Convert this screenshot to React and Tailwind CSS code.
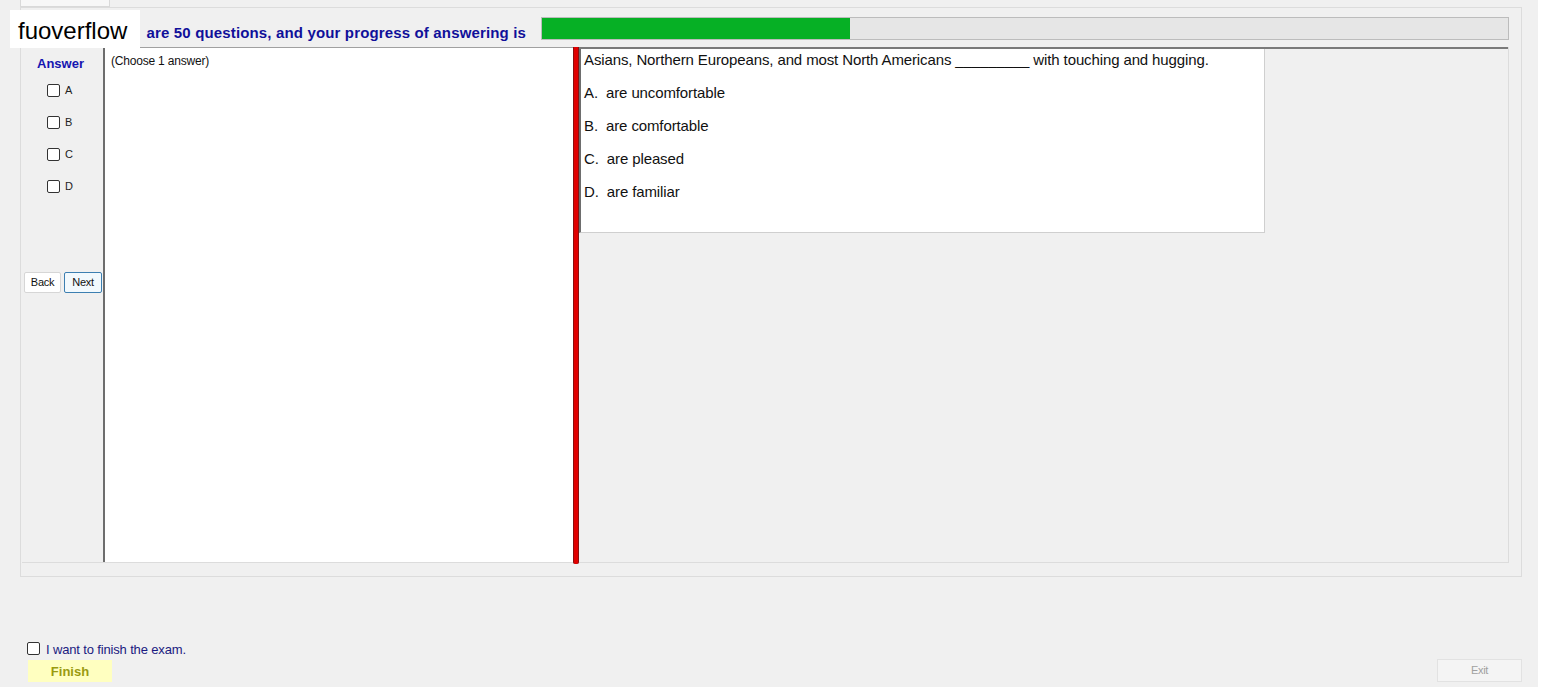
import React from "react";

function Box({ className = "" }) {
  return (
    <span
      className={
        "inline-block w-[13px] h-[13px] bg-white border border-[#333333] rounded-[2px] " +
        className
      }
    />
  );
}

export default function App() {
  const font = { fontFamily: '"Liberation Sans", Arial, sans-serif' };
  const options = ["A", "B", "C", "D"];
  const answers = [
    "A.  are uncomfortable",
    "B.  are comfortable",
    "C.  are pleased",
    "D.  are familiar",
  ];
  return (
    <div className="w-[1542px] h-[690px] bg-white overflow-hidden" style={font}>
      <div className="relative w-[1538px] h-[687px] bg-[#f0f0f0] flex flex-col">
        {/* tab header */}
        <div className="ml-[20px] w-[90px] h-[7px] bg-[#f7f7f7] border-x border-b border-[#d9d9d9]" />
        {/* group */}
        <div className="ml-[20px] w-[1502px] h-[570px] border border-[#dcdcdc] flex flex-col">
          {/* header row */}
          <div className="h-[39px] flex items-start pt-[9px]">
            <div className="w-[520px] h-[23px] flex items-end justify-end pr-[15px]">
              <span className="text-[15px] font-bold text-[#10109a] whitespace-nowrap leading-none tracking-[0.15px]">
                are 50 questions, and your progress of answering is
              </span>
            </div>
            <div className="w-[968px] h-[23px] bg-[#e6e6e6] border border-[#bcbcbc] flex">
              <div className="w-[308px] h-full bg-[#06b025]" />
            </div>
          </div>
          {/* main */}
          <div className="ml-[1px] w-[1487px] h-[516px] flex border-b border-[#dcdcdc] border-r">
            {/* left column */}
            <div className="w-[81px] h-full flex flex-col">
              <div className="h-[31px] flex items-end justify-center pr-[4px]">
                <span className="text-[13px] font-bold text-[#1515b0] leading-none mb-[8px]">Answer</span>
              </div>
              <div className="flex flex-col gap-[19px] pl-[25px] pt-[6px]">
                {options.map((o) => (
                  <div key={o} className="flex items-center gap-[5px] h-[13px]">
                    <Box />
                    <span className="text-[11px] text-[#222] leading-none">{o}</span>
                  </div>
                ))}
              </div>
              <div className="flex gap-[3px] pl-[2px] mt-[79px]">
                <button className="w-[37px] h-[21px] bg-white border border-[#d6d6d6] rounded-[2px] text-[11px] text-[#111] tracking-[-0.3px]">
                  Back
                </button>
                <button className="w-[38px] h-[21px] bg-[#f2f9fd] border border-[#3c7fb1] rounded-[2px] text-[11px] text-[#111] tracking-[-0.3px]">
                  Next
                </button>
              </div>
            </div>
            {/* left panel */}
            <div className="w-[470px] h-full bg-white border-l-2 border-[#6d6d6d] border-t border-t-[#a0a0a0] pl-[6px] pt-0">
              <span className="text-[12px] text-[#111] leading-none tracking-[-0.2px]">(Choose 1 answer)</span>
            </div>
            {/* splitter */}
            <div className="w-[6px] h-[517px] bg-[#e00000] border-x border-[#8a1010] rounded-b-[2px]" />
            {/* right area */}
            <div className="flex-1 h-full border-t-2 border-[#7a7a7a] flex flex-col">
              <div className="w-[686px] h-[184px] bg-white border-l-2 border-l-[#6d6d6d] border-r border-b border-[#cfcfcf] pl-[3px] pt-[1px] flex flex-col">
                <div className="text-[15px] text-[#111] leading-[20px] h-[33px] whitespace-nowrap tracking-[-0.12px]">
                  Asians, Northern Europeans, and most North Americans _________ with touching and hugging.
                </div>
                {answers.map((a) => (
                  <div key={a} className="text-[15px] text-[#111] leading-[20px] h-[33px] whitespace-pre tracking-[-0.12px]">
                    {a}
                  </div>
                ))}
              </div>
            </div>
          </div>
        </div>
        {/* bottom */}
        <div className="mt-[65px] ml-[27px] flex items-center gap-[6px] h-[13px]">
          <Box />
          <span className="text-[13px] text-[#1a1a80] leading-none tracking-[-0.15px] mt-[2px]">I want to finish the exam.</span>
        </div>
        <div className="mt-[4px] flex items-start justify-between pl-[28px] pr-[16px]">
          <div className="mt-[1px] w-[84px] h-[22px] bg-[#ffffc0] flex items-center justify-center">
            <span className="text-[13px] font-bold text-[#9a9a10] leading-none">Finish</span>
          </div>
          <div className="w-[85px] h-[23px] bg-[#f4f4f4] border border-[#e2e2e2] flex items-center justify-center">
            <span className="text-[11px] text-[#a0a0a0] leading-none tracking-[-0.3px]">Exit</span>
          </div>
        </div>
        {/* watermark overlay */}
        <div className="absolute left-[10px] top-[10px] w-[130px] h-[38px] bg-white flex items-center pl-[8px] pt-[4px]">
          <span className="text-[24px] text-black leading-none">fuoverflow</span>
        </div>
      </div>
    </div>
  );
}
